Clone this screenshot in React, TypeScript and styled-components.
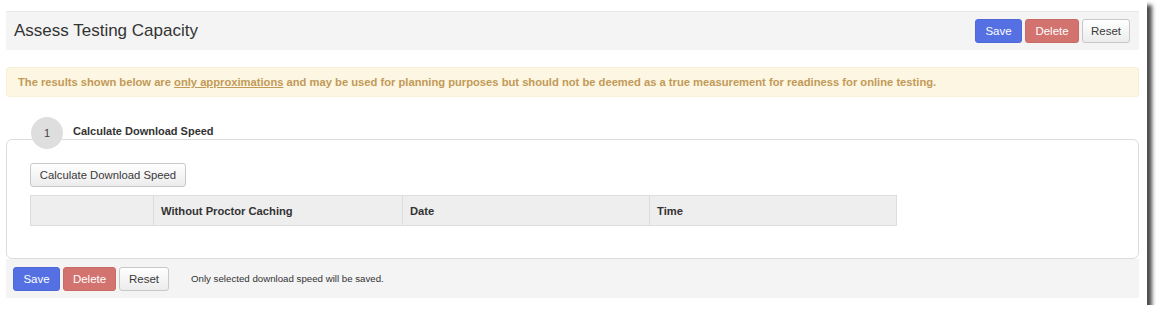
import React from 'react';
import styled, { createGlobalStyle, css } from 'styled-components';

const GlobalStyle = createGlobalStyle`
    html, body {
        margin: 0;
        padding: 0;
        background: #ffffff;
    }
    body {
        font-family: 'Liberation Sans', Arial, sans-serif;
        color: #333333;
    }
`;

const Frame = styled.div`
    width: 1147px;
    height: 305px;
    box-sizing: border-box;
    padding: 11px 8px 0 6px;
    background: #ffffff;
    box-shadow: 5px 5px 4px rgba(0, 0, 0, 0.7);
    display: flex;
    flex-direction: column;
`;

const HeaderBar = styled.div`
    height: 39px;
    box-sizing: border-box;
    border-top: 1px solid #e8e8e8;
    background: #f4f4f4;
    display: flex;
    align-items: center;
    justify-content: space-between;
    padding: 0 9px 0 8px;
`;

const Title = styled.h1`
    margin: 0;
    font-size: 17px;
    font-weight: normal;
    color: #333333;
`;

const ButtonGroup = styled.div`
    display: flex;
    gap: 3px;
`;

type Variant = 'primary' | 'danger' | 'default';

const variants = {
    primary: css`
        background: #5470e3;
        border-color: #4e69d8;
        color: #ffffff;
    `,
    danger: css`
        background: #d2736f;
        border-color: #c96b67;
        color: #ffffff;
    `,
    default: css`
        background: linear-gradient(#ffffff, #ececec);
        border-color: #c8c8c8;
        color: #3a3a3a;
    `
};

const Button = styled.button<{ $variant: Variant; $width: number }>`
    width: ${props => props.$width}px;
    height: 24px;
    padding: 0;
    border: 1px solid;
    border-radius: 3px;
    font-family: 'Liberation Sans', Arial, sans-serif;
    font-size: 11.5px;
    cursor: pointer;
    ${props => variants[props.$variant]}
`;

const Alert = styled.div`
    margin-top: 17px;
    height: 30px;
    box-sizing: border-box;
    background: #fcf6e2;
    border: 1px solid #f8efd6;
    border-radius: 3px;
    display: flex;
    align-items: center;
    padding-left: 11px;
    font-size: 11.2px;
    font-weight: bold;
    color: #c29a58;

    u {
        text-decoration: underline;
    }
`;

const Card = styled.div`
    margin-top: 42px;
    height: 120px;
    box-sizing: border-box;
    border: 1px solid #dcdcdc;
    border-radius: 6px;
    padding: 0 23px;
    display: flex;
    flex-direction: column;
    align-items: flex-start;
`;

const StepHeader = styled.div`
    margin-top: -23px;
    margin-left: 1px;
    display: flex;
    align-items: center;
    gap: 10px;
`;

const StepCircle = styled.div`
    width: 32px;
    height: 32px;
    border-radius: 50%;
    background: #dedede;
    color: #444444;
    font-size: 11px;
    display: flex;
    align-items: center;
    justify-content: center;
`;

const StepLabel = styled.span`
    font-size: 11px;
    font-weight: bold;
    color: #333333;
    margin-top: -4px;
`;

const CalcButton = styled(Button)`
    margin-top: 14px;
    font-size: 11.3px;
`;

const Table = styled.table`
    margin-top: 8px;
    width: 867px;
    border-collapse: collapse;
`;

const HeadCell = styled.th<{ $width: number }>`
    width: ${props => props.$width}px;
    height: 30px;
    box-sizing: border-box;
    padding: 0 7px;
    background: #eeeeee;
    border: 1px solid #dddddd;
    text-align: left;
    font-size: 11.2px;
    font-weight: bold;
    color: #333333;
`;

const FooterBar = styled.div`
    height: 39px;
    background: #f4f4f4;
    display: flex;
    align-items: center;
    padding-left: 7px;
`;

const FooterNote = styled.span`
    margin-left: 22px;
    font-size: 9.7px;
    color: #333333;
`;

const App = () => {
    return (
        <>
            <GlobalStyle />
            <Frame>
                <HeaderBar>
                    <Title>Assess Testing Capacity</Title>
                    <ButtonGroup>
                        <Button $variant="primary" $width={47}>Save</Button>
                        <Button $variant="danger" $width={54}>Delete</Button>
                        <Button $variant="default" $width={48}>Reset</Button>
                    </ButtonGroup>
                </HeaderBar>
                <Alert>
                    <span>
                        The results shown below are <u>only approximations</u> and may be used for
                        planning purposes but should not be deemed as a true measurement for readiness
                        for online testing.
                    </span>
                </Alert>
                <Card>
                    <StepHeader>
                        <StepCircle>1</StepCircle>
                        <StepLabel>Calculate Download Speed</StepLabel>
                    </StepHeader>
                    <CalcButton $variant="default" $width={156}>
                        Calculate Download Speed
                    </CalcButton>
                    <Table>
                        <thead>
                            <tr>
                                <HeadCell $width={123} />
                                <HeadCell $width={249}>Without Proctor Caching</HeadCell>
                                <HeadCell $width={247}>Date</HeadCell>
                                <HeadCell $width={247}>Time</HeadCell>
                            </tr>
                        </thead>
                    </Table>
                </Card>
                <FooterBar>
                    <ButtonGroup>
                        <Button $variant="primary" $width={47}>Save</Button>
                        <Button $variant="danger" $width={53}>Delete</Button>
                        <Button $variant="default" $width={50}>Reset</Button>
                    </ButtonGroup>
                    <FooterNote>Only selected download speed will be saved.</FooterNote>
                </FooterBar>
            </Frame>
        </>
    );
};

export default App;
